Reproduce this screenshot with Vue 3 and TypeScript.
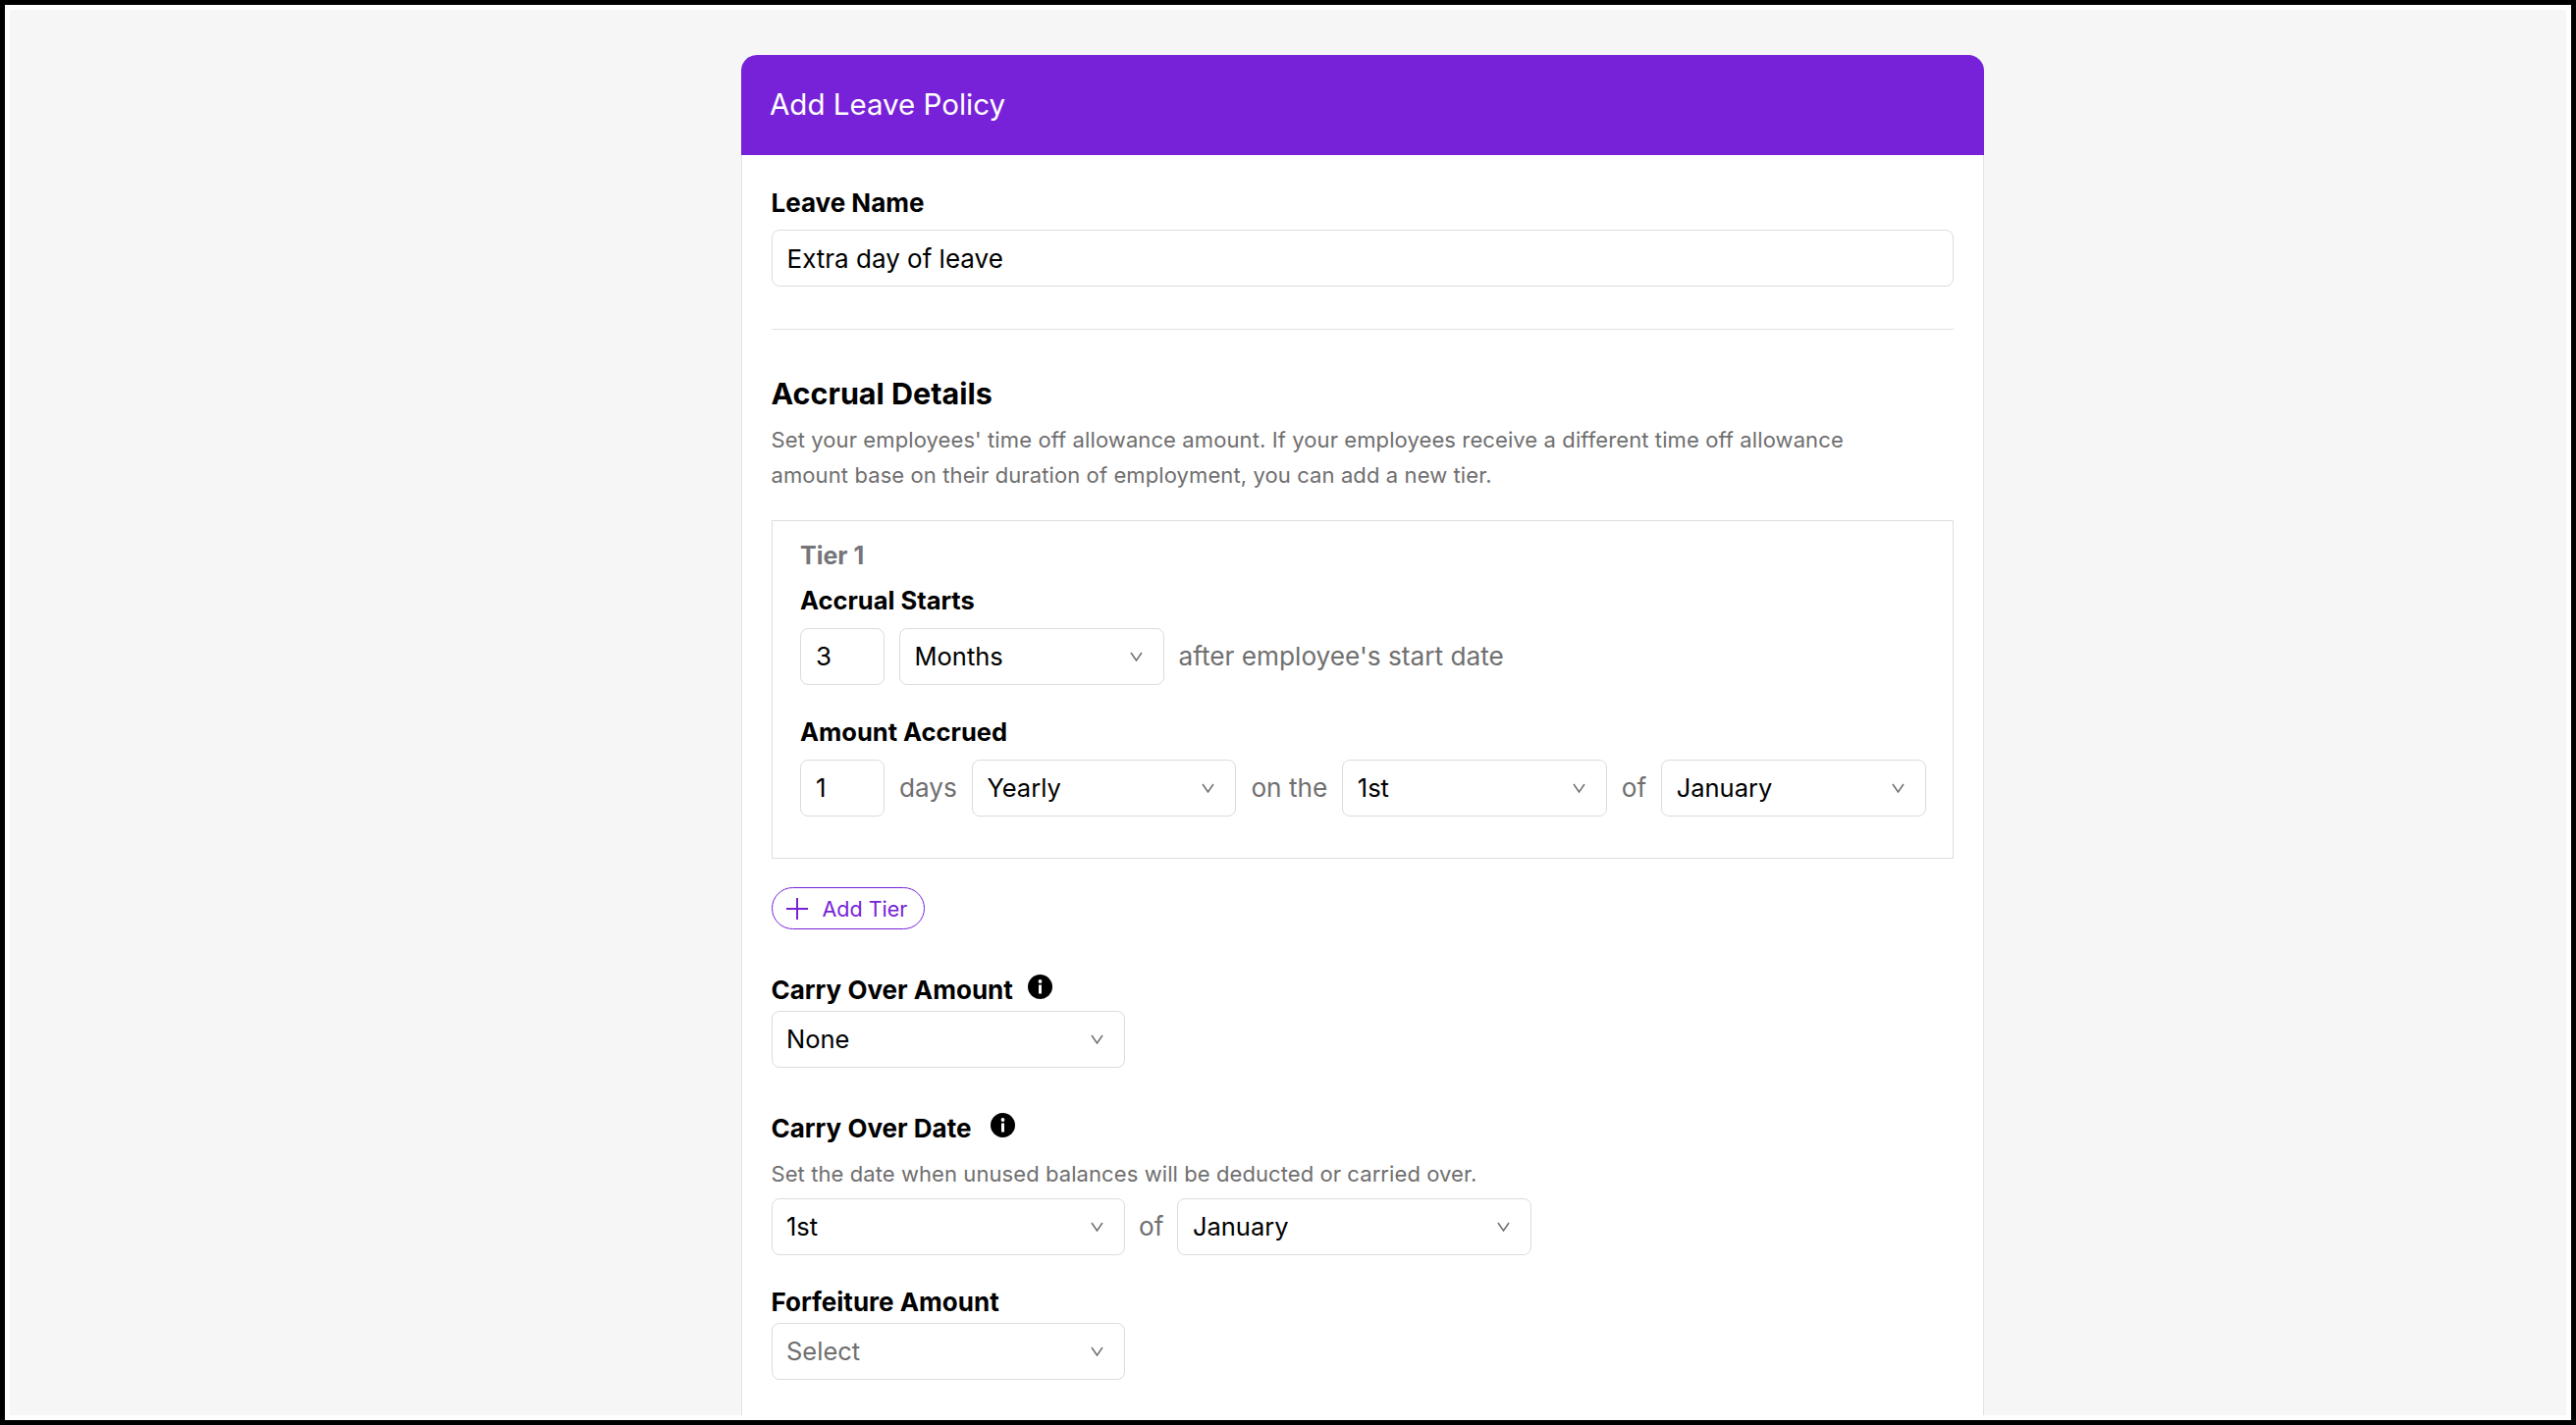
<script setup lang="ts">
const chevron = 'M1 1l5.5 8L12 1'
</script>

<template>
  <div class="frame">
    <div class="mat">
      <main class="page">
        <section class="card">
          <header class="card-head">Add Leave Policy</header>
          <div class="card-body">
            <label class="label first">Leave Name</label>
            <div class="field wide"><span>Extra day of leave</span></div>
            <hr class="divider" />
            <h2 class="heading">Accrual Details</h2>
            <p class="desc">Set your employees' time off allowance amount. If your employees receive a different time off allowance<br />amount base on their duration of employment, you can add a new tier.</p>
            <div class="tier">
              <div class="tier-title">Tier 1</div>
              <label class="label tier-label">Accrual Starts</label>
              <div class="row">
                <div class="field num"><span>3</span></div>
                <div class="field sel"><span>Months</span><svg class="chev" viewBox="0 0 13 10"><path :d="chevron" /></svg></div>
                <span class="word">after employee's start date</span>
              </div>
              <label class="label tier-label second">Amount Accrued</label>
              <div class="row">
                <div class="field num"><span>1</span></div>
                <span class="word">days</span>
                <div class="field sel"><span>Yearly</span><svg class="chev" viewBox="0 0 13 10"><path :d="chevron" /></svg></div>
                <span class="word">on the</span>
                <div class="field sel"><span>1st</span><svg class="chev" viewBox="0 0 13 10"><path :d="chevron" /></svg></div>
                <span class="word">of</span>
                <div class="field sel"><span>January</span><svg class="chev" viewBox="0 0 13 10"><path :d="chevron" /></svg></div>
              </div>
            </div>
            <button class="add-tier" type="button">
              <svg class="plus" viewBox="0 0 22 22"><path d="M11 0v22M0 11h22" /></svg>
              <span>Add Tier</span>
            </button>
            <div class="label-row carry">
              <label class="label">Carry Over Amount</label>
              <svg class="info" viewBox="0 0 25 25"><circle cx="12.5" cy="12.5" r="12.5" /><rect x="11" y="10.5" width="3" height="9" /><circle cx="12.5" cy="7" r="1.9" /></svg>
            </div>
            <div class="field lg"><span>None</span><svg class="chev" viewBox="0 0 13 10"><path :d="chevron" /></svg></div>
            <div class="label-row date">
              <label class="label">Carry Over Date</label>
              <svg class="info" viewBox="0 0 25 25"><circle cx="12.5" cy="12.5" r="12.5" /><rect x="11" y="10.5" width="3" height="9" /><circle cx="12.5" cy="7" r="1.9" /></svg>
            </div>
            <p class="hint">Set the date when unused balances will be deducted or carried over.</p>
            <div class="row tight">
              <div class="field lg"><span>1st</span><svg class="chev" viewBox="0 0 13 10"><path :d="chevron" /></svg></div>
              <span class="word">of</span>
              <div class="field lg"><span>January</span><svg class="chev" viewBox="0 0 13 10"><path :d="chevron" /></svg></div>
            </div>
            <label class="label forfeit">Forfeiture Amount</label>
            <div class="field lg muted"><span>Select</span><svg class="chev" viewBox="0 0 13 10"><path :d="chevron" /></svg></div>
          </div>
        </section>
      </main>
    </div>
  </div>
</template>

<style>
html, body { margin: 0; overflow: hidden; }
</style>

<style scoped>
.frame {
  box-sizing: border-box;
  height: 1452px;
  border: 5px solid #000;
  font-family: Inter, "Noto Sans", sans-serif;
  color: #000;
}
.mat {
  box-sizing: border-box;
  height: 100%;
  border: 5px solid #fff;
}
.page {
  height: 100%;
  background: #f6f6f6;
  overflow: hidden;
  padding: 46px 0 0 745px;
  box-sizing: border-box;
}
.card {
  width: 1266px;
  min-height: 1500px;
  background: #fff;
  border-radius: 16px 16px 0 0;
  box-sizing: border-box;
}
.card-head {
  height: 102px;
  background: #7722d8;
  color: #fff;
  font-size: 29.5px;
  line-height: 100px;
  padding-left: 29px;
  border-radius: 16px 16px 0 0;
}
.card-body {
  border: 1px solid #e2e2e2;
  border-top: 0;
  padding: 0 30px 0 29.5px;
  min-height: 1400px;
}
.label {
  display: block;
  font-size: 26px;
  line-height: 30px;
  font-weight: 700;
}
.first { padding-top: 34px; margin-bottom: 12px; }
.field {
  box-sizing: border-box;
  height: 58px;
  border: 1.5px solid #dcdcdc;
  border-radius: 8px;
  background: #fff;
  display: flex;
  align-items: center;
  justify-content: space-between;
  padding: 0 15px;
  font-size: 26px;
  flex: none;
}
.sel, .lg { font-size: 25.5px; padding-left: 14.5px; padding-bottom: 2px; }
.wide { width: 100%; }
.divider { border: 0; border-top: 1.5px solid #e2e2e2; margin: 43px 0 0; }
.heading { font-size: 30.5px; line-height: 38px; font-weight: 700; margin: 46px 0 0; }
.desc { font-size: 22px; line-height: 36px; letter-spacing: 0.1px; color: #6f6f6f; margin: 10px 0 0; }
.tier {
  box-sizing: border-box;
  height: 345px;
  border: 1.5px solid #dedede;
  margin-top: 28px;
  padding: 19px 28px 0 28.5px;
}
.tier-title { font-size: 25px; line-height: 32px; font-weight: 700; color: #75757a; }
.tier-label { margin: 15px 0 13px; font-size: 25.5px; }
.tier-label.second { margin-top: 33px; }
.row { display: flex; align-items: center; gap: 15px; }
.tight { gap: 14px; }
.num { width: 86px; padding-bottom: 2px; }
.sel { width: 269.5px; }
.lg { width: 360.5px; }
.word { font-size: 26.2px; color: #6f6f6f; white-space: nowrap; padding-bottom: 1px; }
.muted span { color: #6f6f6f; }
.chev { width: 13px; height: 10px; fill: none; stroke: #6f6f6f; stroke-width: 1.5; margin: 2px 6px 0 0; flex: none; }
.add-tier {
  display: flex;
  align-items: center;
  gap: 15px;
  height: 43px;
  width: 156px;
  box-sizing: border-box;
  margin-top: 29px;
  padding: 0 0 0 14px;
  background: #fff;
  border: 1.5px solid #7722d8;
  border-radius: 22px;
  color: #7722d8;
  font: inherit;
  font-size: 21.5px;
}
.plus { width: 22px; height: 22px; fill: none; stroke: #7722d8; stroke-width: 2; flex: none; }
.label-row { display: flex; align-items: flex-start; gap: 15px; }
.carry { margin: 47px 0 6px; }
.date { margin: 47px 0 16px; gap: 20px; }
.info { width: 25px; height: 25px; fill: #000; flex: none; margin-top: -1px; }
.info rect, .info circle + rect + circle { fill: #fff; }
.hint { font-size: 22px; line-height: 30px; letter-spacing: 0.08px; color: #6f6f6f; margin: 0 0 10px; }
.forfeit { margin: 33px 0 6px; }
</style>
